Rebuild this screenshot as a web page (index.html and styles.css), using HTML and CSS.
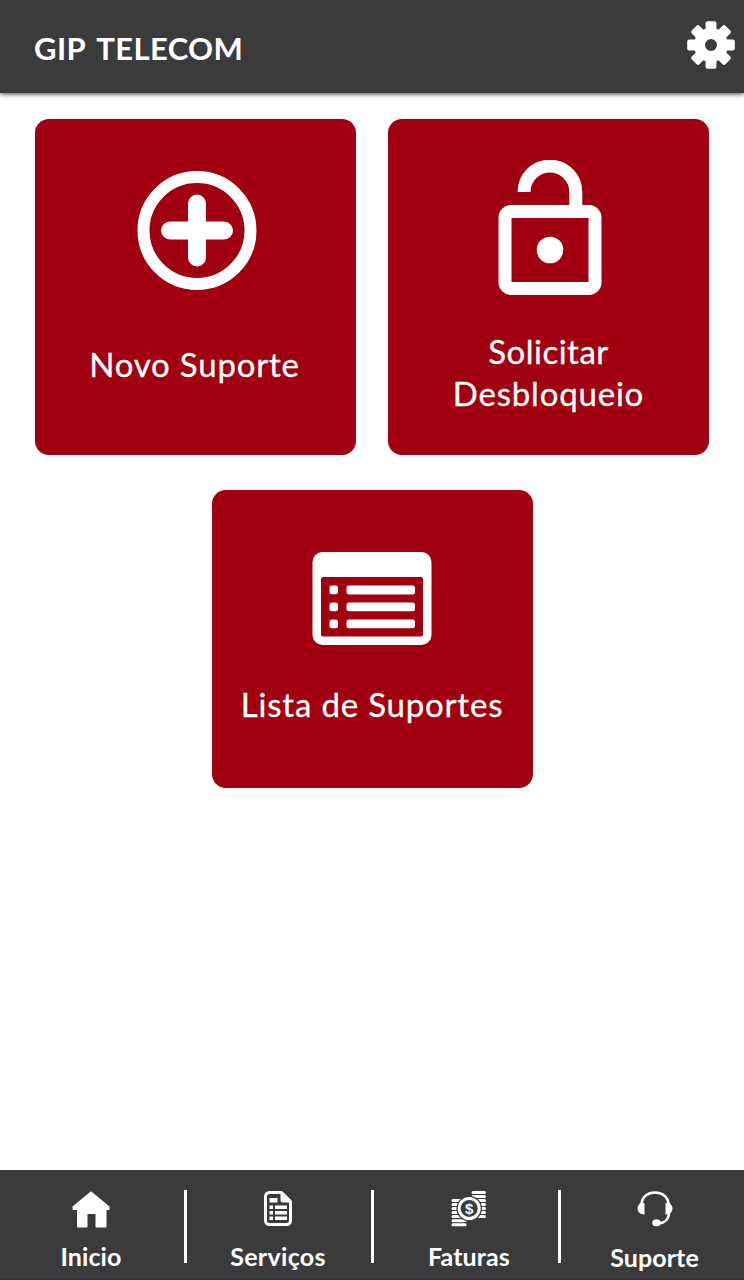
FILE: index.html
```html
<!DOCTYPE html>
<html lang="pt-BR">
<head>
  <meta charset="UTF-8" />
  <meta name="viewport" content="width=device-width, initial-scale=1.0"/>
  <title>GIP TELECOM</title>
  <link rel="stylesheet" href="styles.css">
</head>
<body>

  <header class="top-bar">
    <h1>GIP TELECOM</h1>
    <a href="#" class="settings" aria-label="Configurações">
      <svg width="48" height="48" viewBox="-24 -24 48 48">
        <defs>
          <rect id="tooth" x="-5.4" y="-23.8" width="10.8" height="14" rx="2"/>
        </defs>
        <g fill="#fff">
          <use href="#tooth"/>
          <use href="#tooth" transform="rotate(45)"/>
          <use href="#tooth" transform="rotate(90)"/>
          <use href="#tooth" transform="rotate(135)"/>
          <use href="#tooth" transform="rotate(180)"/>
          <use href="#tooth" transform="rotate(225)"/>
          <use href="#tooth" transform="rotate(270)"/>
          <use href="#tooth" transform="rotate(315)"/>
        </g>
        <circle r="11.5" fill="none" stroke="#fff" stroke-width="11"/>
      </svg>
    </a>
  </header>

  <main>
    <a href="#" class="card novo">
      <svg width="120" height="120" viewBox="0 0 120 120">
        <circle cx="60" cy="60.5" r="53.5" fill="none" stroke="#fff" stroke-width="12"/>
        <path d="M60 33.500v54M33 60.500h54" stroke="#fff" stroke-width="18" stroke-linecap="round"/>
      </svg>
      <span class="title">Novo Suporte</span>
    </a>

    <a href="#" class="card desbloqueio">
      <svg width="104" height="136" viewBox="0 0 104 136">
        <path d="M26 32a25.800 25.800 0 0 1 51.800 0V50" fill="none" stroke="#fff" stroke-width="13"/>
        <path fill="#fff" fill-rule="evenodd" d="M13 45h78a12.500 12.500 0 0 1 12.500 12.500v65a12.500 12.500 0 0 1-12.500 12.500H13A12.500 12.500 0 0 1 .5 122.500V57.500A12.500 12.500 0 0 1 13 45zM13.500 58v64h77V58z"/>
        <circle cx="52" cy="90" r="13.300" fill="#fff"/>
      </svg>
      <span class="title"><span class="line">Solicitar</span><br/>Desbloqueio</span>
    </a>

    <a href="#" class="card lista">
      <svg width="120" height="94" viewBox="0 0 120 94">
        <path fill="#fff" fill-rule="evenodd" d="M10.500 0h99a10 10 0 0 1 10 10v73a10 10 0 0 1-10 10h-99a10 10 0 0 1-10-10V10a10 10 0 0 1 10-10zM11 25a2 2 0 0 0-2 2v55.500a2 2 0 0 0 2 2h98a2 2 0 0 0 2-2V27a2 2 0 0 0-2-2z"/>
        <g fill="#fff">
          <rect x="17.500" y="33.500" width="8.500" height="8.700" rx="2.500"/>
          <rect x="17.500" y="50.500" width="8.500" height="8.700" rx="2.500"/>
          <rect x="17.500" y="67.500" width="8.500" height="8.700" rx="2.500"/>
          <rect x="34.500" y="33.500" width="68.500" height="9" rx="2.500"/>
          <rect x="34.500" y="50.500" width="68.500" height="8.700" rx="2.500"/>
          <rect x="34.500" y="67.500" width="68.500" height="8.700" rx="2.500"/>
        </g>
      </svg>
      <span class="title">Lista de Suportes</span>
    </a>
  </main>

  <nav class="bottom-bar">
    <a href="#" class="tab inicio">
      <svg width="38" height="38" viewBox="0 0 38 38">
        <path fill="#fff" stroke="#fff" stroke-width="2" stroke-linejoin="round" d="M19 2.500L36.500 17V19H33.500V36.500H24.500V23H14.500V36.500H6V19H1.500V17z"/>
      </svg>
      <span class="label">Inicio</span>
    </a>
    <div class="divider"></div>
    <a href="#" class="tab servicos">
      <svg width="28" height="38" viewBox="0 0 28 38">
        <path fill="none" stroke="#fff" stroke-width="3" stroke-linejoin="round" d="M5.500 2.500H17.500L26.500 11.500V30.500a4 4 0 0 1-4 4h-17a4 4 0 0 1-4-4v-24a4 4 0 0 1 4-4z"/>
        <path fill="#fff" d="M16.500 2L27 12.500H18.500a2 2 0 0 1-2-2zM5.500 8h8v4.500h-8zM5.500 15.500H9V19H5.500zM11 15.500h12V19H11zM5.500 21H9v3.500H5.500zM11 21h12v3.500H11zM5.500 26.500H9V30H5.500zM11 26.500h12V30H11z"/>
      </svg>
      <span class="label">Serviços</span>
    </a>
    <div class="divider"></div>
    <a href="#" class="tab faturas">
      <svg width="36" height="38" viewBox="0 0 36 38">
        <path stroke="#fff" stroke-width="3" stroke-linecap="round" d="M22 2.500H33.500M22 6.500H33.500M22 10.500H33.500M22 14.500H33.500M22 18.500H33.500M22 22.500H33.500M22 26.500H33.500M2 10.500H13M2 14.500H13M2 18.500H13M2 22.500H13M2 26.500H13M2 30.700H14M2 34.700H14"/>
        <circle cx="18.200" cy="18.500" r="12.800" fill="#3b3b3d"/>
        <circle cx="18.200" cy="18.500" r="10" fill="none" stroke="#fff" stroke-width="3"/>
        <text class="coin" x="18.200" y="23.700" text-anchor="middle">$</text>
      </svg>
      <span class="label">Faturas</span>
    </a>
    <div class="divider"></div>
    <a href="#" class="tab suporte">
      <svg width="36" height="38" viewBox="0 0 36 38">
        <path fill="none" stroke="#fff" stroke-width="2.600" d="M4.500 14C5 6.500 11 2.500 18 2.500S31 6.500 31.500 14M32 22C32 29 28 33.500 20 33.500"/>
        <path fill="#fff" d="M5 12.500Q7.500 12 7.500 14V24.500C3 24.500.5 21.500.5 18.500C.5 16 2.500 13 5 12.500zM31 12.500Q28.500 12 28.500 14V24.500C33 24.500 35.500 21.500 35.500 18.500C35.500 16 33.500 13 31 12.500z"/>
        <ellipse cx="19.500" cy="32.800" rx="4.300" ry="3.500" fill="#fff"/>
      </svg>
      <span class="label">Suporte</span>
    </a>
  </nav>

</body>
</html>
```
FILE: styles.css
```css
* { box-sizing: border-box; }
html, body {
  margin: 0; padding: 0;
  width: 100%; height: 100vh;
  overflow: hidden;
  font-family: Lato, sans-serif;
  background-color: #fff;
  color: #fff;
}
body {
  display: flex;
  flex-direction: column;
}
a {
  color: inherit;
  text-decoration: none;
}
svg {
  display: block;
  flex-shrink: 0;
}
.top-bar {
  height: 93px;
  padding: 0 9px 0 34px;
  display: flex;
  justify-content: space-between;
  background-color: #3b3b3d;
  box-shadow: 0 1px 5px rgba(0, 0, 0, 0.75);
}
h1 {
  margin: 0;
  padding-top: 30px;
  font-size: 31px;
  line-height: 36px;
  font-weight: 700;
  letter-spacing: 0.4px;
  word-spacing: 4px;
}
.settings {
  padding-top: 21px;
}
main {
  flex-grow: 1;
  padding: 26px 35px 0;
  display: flex;
  flex-wrap: wrap;
  justify-content: center;
  align-content: flex-start;
  gap: 35px 32px;
}
.card {
  width: 321px;
  height: 336px;
  border-radius: 14px;
  background-color: #a0000f;
  display: flex;
  flex-direction: column;
  align-items: center;
  text-align: center;
}
.title {
  font-size: 33px;
  line-height: 42px;
  letter-spacing: 0.8px;
  -webkit-text-stroke: 0.3px #fff;
}
.line {
  letter-spacing: 0.5px;
}
.novo {
  padding: 51px 0 0 3px;
}
.novo .title {
  margin-top: 53px;
  margin-right: 5px;
}
.desbloqueio {
  padding: 41px 0 0 3px;
}
.desbloqueio .title {
  margin-top: 34px;
  margin-right: 3px;
}
.lista {
  height: 298px;
  padding-top: 62px;
}
.lista .title {
  margin-top: 37px;
}
.bottom-bar {
  height: 110px;
  background-color: #3b3b3d;
  border-bottom: 1px solid #333335;
  display: grid;
  grid-template-columns: 184px 3px 184px 3px 184px 3px 183px;
}
.tab {
  padding-top: 20px;
  display: flex;
  flex-direction: column;
  align-items: center;
}
.divider {
  width: 3px;
  height: 73px;
  margin-top: 20px;
  background-color: #fff;
}
.label {
  margin-top: 13px;
  font-size: 25px;
  line-height: 30px;
  font-weight: 700;
  letter-spacing: 0.1px;
}
.inicio, .servicos {
  padding-right: 2px;
}
.servicos .label {
  letter-spacing: 0.3px;
}
.faturas {
  padding-left: 6px;
}
.suporte {
  padding-left: 4px;
}
.suporte .label {
  margin-top: 14px;
}
.coin {
  font-family: "Liberation Sans", sans-serif;
  font-size: 15px;
  font-weight: 700;
  fill: #fff;
}
```
